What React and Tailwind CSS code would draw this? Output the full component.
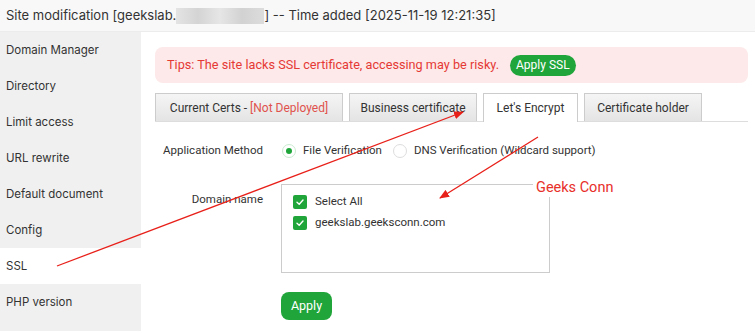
import React from "react";

const menu = ["Domain Manager", "Directory", "Limit access", "URL rewrite", "Default document", "Config", "SSL", "PHP version"];

function Check() {
  return (
    <span className="flex h-[14px] w-[14px] items-center justify-center rounded-[2px] bg-[#20a53a]">
      <svg width="10" height="10" viewBox="0 0 10 10" fill="none">
        <path d="M2 5.2 L4.2 7.2 L8 3" stroke="white" strokeWidth="1.4" strokeLinecap="round" strokeLinejoin="round" />
      </svg>
    </span>
  );
}

export default function App() {
  const font = { fontFamily: "Roboto, 'Noto Sans', sans-serif" };
  const inter = { fontFamily: "Inter, 'Noto Sans', sans-serif" };
  return (
    <div className="relative h-[331px] w-[755px] overflow-hidden bg-white text-[#333]" style={font}>
      <div className="flex h-[32px] items-center border-b border-[#ececec] bg-[#f8f8f8] pl-[6px] text-[13px] text-[#333]" style={inter}>
        <span>Site modification [geekslab.</span>
        <span className="inline-block h-[16px] w-[88px] bg-[linear-gradient(90deg,#e4e4e4,#d4d4d4,#e6e6e6,#d2d2d2,#dcdcdc)]" />
        <span>] -- Time added [2025-11-19 12:21:35]</span>
      </div>
      <div className="flex h-[299px]">
        <div className="w-[141px] shrink-0 bg-[#f0f0f0]" style={inter}>
          {menu.map((m) => (
            <div key={m} className={`flex h-[36px] items-center pl-[6px] pt-[2px] text-[11.5px] ${m === "SSL" ? "bg-white" : ""}`}>
              {m}
            </div>
          ))}
        </div>
        <div className="flex-1 pl-[14px] pr-[7px] pt-[15px]">
          <div className="flex h-[36px] items-center rounded-[8px] bg-[#fde9e9] pl-[12px] text-[12.7px] text-[#e53935]">
            <span>Tips: The site lacks SSL certificate, accessing may be risky.</span>
            <span className="ml-[11px] flex h-[21px] items-center rounded-full bg-[#20a53a] px-[6px] text-[12px] text-white">Apply SSL</span>
          </div>
          <div className="mt-[11px] flex h-[28px] items-end gap-[6px] border-b border-[#ddd] text-[12px]">
            <div className="flex h-[28px] w-[188px] items-center justify-center border border-b-0 border-[#ccc] bg-[linear-gradient(#f5f5f5,#e4e4e4)]">
              Current Certs -&nbsp;<span className="text-[#e0524d]">[Not Deployed]</span>
            </div>
            <div className="flex h-[28px] w-[128px] items-center justify-center border border-b-0 border-[#ccc] bg-[linear-gradient(#f5f5f5,#e4e4e4)]">Business certificate</div>
            <div className="relative -mb-px flex h-[29px] w-[95px] items-center justify-center border border-b-0 border-[#ccc] bg-white">Let's Encrypt</div>
            <div className="flex h-[28px] w-[118px] items-center justify-center border border-b-0 border-[#ccc] bg-[linear-gradient(#f5f5f5,#e4e4e4)]">Certificate holder</div>
          </div>
          <div className="mt-[18px] flex h-[22px] items-center text-[11.5px]">
            <div className="w-[108px] whitespace-nowrap text-right">Application Method</div>
            <div className="ml-[19px] flex items-center">
              <span className="flex h-[14px] w-[14px] items-center justify-center rounded-full border border-[#c9ebcf]">
                <span className="h-[6px] w-[6px] rounded-full bg-[#20a53a]" />
              </span>
              <span className="ml-[7px]">File Verification</span>
              <span className="ml-[11px] h-[14px] w-[14px] rounded-full border border-[#ddd]" />
              <span className="ml-[7px]">DNS Verification (Wildcard support)</span>
            </div>
          </div>
          <div className="mt-[22px] flex text-[11.5px]">
            <div className="w-[108px] pt-[7px] text-right">Domain name</div>
            <div className="ml-[18px]">
              <div className="h-[89px] w-[269px] border border-[#ccc] px-[11px] pt-[10px]">
                <div className="flex h-[14px] items-center gap-[8px]"><Check /><span>Select All</span></div>
                <div className="mt-[7px] flex h-[14px] items-center gap-[8px]"><Check /><span>geekslab.geeksconn.com</span></div>
              </div>
              <div className="mt-[19px] flex h-[28px] w-[51px] items-center justify-center rounded-[8px] bg-[#20a53a] text-[12.5px] text-white">Apply</div>
            </div>
          </div>
        </div>
      </div>
      <div className="absolute left-[533px] top-[178px] bg-white px-[3px] text-[14.5px] leading-[19px] text-[#e8302a]">Geeks Conn</div>
      <svg className="pointer-events-none absolute left-0 top-0" width="755" height="331" viewBox="0 0 755 331">
        <defs>
          <marker id="ah" markerWidth="10" markerHeight="8" refX="9" refY="4" orient="auto" markerUnits="userSpaceOnUse">
            <path d="M0 0 L10 4 L0 8 Z" fill="#e8201a" />
          </marker>
        </defs>
        <line x1="57" y1="266" x2="463" y2="112" stroke="#e8201a" strokeWidth="1.3" markerEnd="url(#ah)" />
        <line x1="538" y1="137" x2="440" y2="198" stroke="#e8201a" strokeWidth="1.3" markerEnd="url(#ah)" />
      </svg>
    </div>
  );
}
